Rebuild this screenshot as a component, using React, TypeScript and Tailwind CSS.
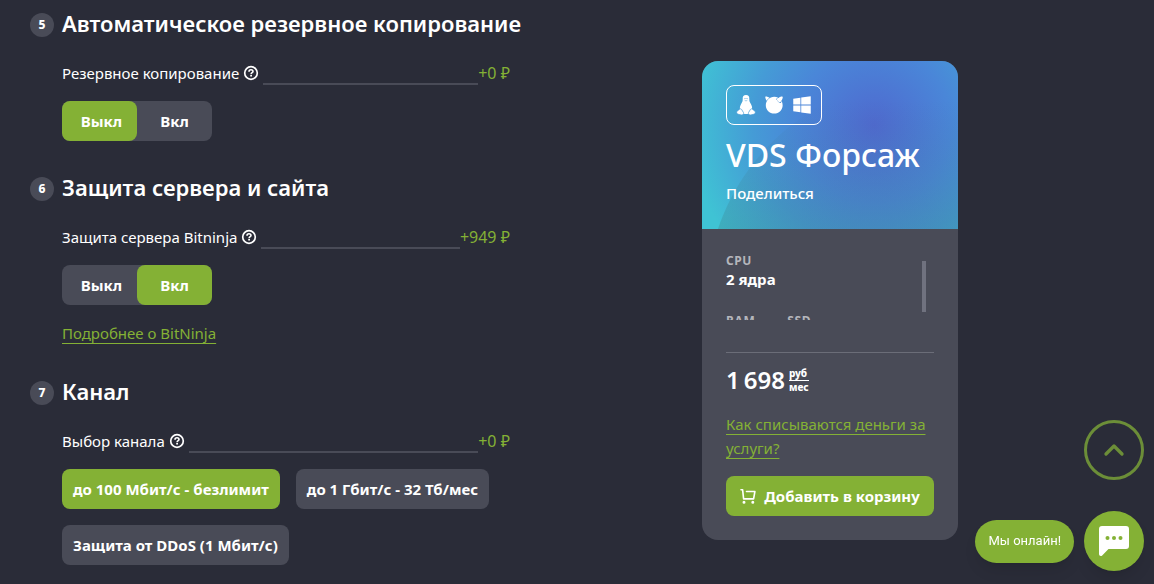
import { ChevronUp } from "lucide-react"
import { FaFreebsd, FaWindows } from "react-icons/fa"

const toggle = ["Выкл", "Вкл"]

const channels = ["до 100 Мбит/с - безлимит", "до 1 Гбит/с - 32 Тб/мес", "Защита от DDoS (1 Мбит/с)"]

const specs = [[{ label: "CPU", value: "2 ядра" }], [{ label: "RAM" }, { label: "SSD" }]]

function HelpIcon() {
  return (
    <svg viewBox="0 0 16 16" fill="none" stroke="currentColor" className="w-4 h-4">
      <circle cx="8" cy="8" r="6.3" strokeWidth="1.7" />
      <path d="M6 6.7C6 5.5 6.9 4.8 8 4.8s2 .7 2 1.7C10 7.7 8.1 7.7 8.1 9.2" strokeWidth="1.6" />
      <path d="M8.1 9.9v1.6" strokeWidth="1.8" />
    </svg>
  )
}

function CartIcon() {
  return (
    <svg
      viewBox="0 0 16 16"
      fill="none"
      stroke="currentColor"
      strokeWidth="1.6"
      strokeLinecap="round"
      strokeLinejoin="round"
      className="w-4 h-4"
    >
      <path d="M1 1.7h1.6l1 9.2h10l1.3-7.4H6.5" />
      <circle cx="4" cy="14.2" r=".7" fill="currentColor" />
      <circle cx="12.8" cy="14.2" r=".7" fill="currentColor" />
    </svg>
  )
}

function TuxIcon() {
  return (
    <svg viewBox="0 0 20 20" className="w-5 h-5" fill="currentColor">
      <path d="M10 0C7.6 0 6.5 1.6 6.7 4c.1 2.2-.5 3.2-1.7 5.2C3.9 11 3.7 13 4 15l3.5 4h5l3.5-4c.3-2 .1-4-1-5.8-1.2-2-1.8-3-1.7-5.2C13.500 1.600 12.400 0 10 0z" />
      <path
        d="M3.600 14.200 1 16.200c-.6.6-.4 2.200.3 2.600 1.600.8 3.700 1.300 5 1.100 1-.2 1.700-1.200 1.200-2.300L5.600 14.500c-.5-.7-1.300-.9-2-.3zM16.400 14.200l2.600 2c.6.6.4 2.200-.3 2.600-1.600.8-3.700 1.300-5 1.100-1-.2-1.700-1.200-1.200-2.300l1.900-3.100c.5-.7 1.300-.9 2-.3z"
        stroke="#459bd6"
        strokeWidth=".7"
      />
      <circle cx="9" cy="3.6" r=".5" fill="#459bd6" />
      <circle cx="11" cy="3.6" r=".5" fill="#459bd6" />
      <path d="M8.6 5.2 10 6l1.400-.8" stroke="#459bd6" strokeWidth=".5" fill="none" />
    </svg>
  )
}

function ChatIcon() {
  return (
    <svg viewBox="0 0 30 30" className="w-[30px] h-[30px]">
      <path d="M3 0h24a3 3 0 0 1 3 3v17a3 3 0 0 1-3 3H9.500l-6.300 6.400C2 30.500 0 30 0 28V3a3 3 0 0 1 3-3z" fill="#fff" />
      <circle cx="8.5" cy="12" r="2" fill="#84b135" />
      <circle cx="15" cy="12" r="2" fill="#84b135" />
      <circle cx="21.5" cy="12" r="2" fill="#84b135" />
    </svg>
  )
}

function Section({ number, title, option, price, children }) {
  return (
    <section className="flex gap-2">
      <span className="w-6 h-6 mt-1.5 shrink-0 rounded-full bg-[#494b57] flex items-center justify-center text-xs font-extrabold">
        {number}
      </span>
      <div className="flex-1 min-w-0">
        <h2 className="text-[22px] leading-8 font-semibold sm:whitespace-nowrap">{title}</h2>
        <div className="flex items-stretch mt-[22px] leading-6">
          <span>{option}</span>
          <button type="button" aria-label="Подсказка" className="mx-1">
            <HelpIcon />
          </button>
          <span className="flex-1 border-b-2 border-[#494b57]" />
          <span className="text-base text-[#84b135]">{price}</span>
        </div>
        <div className="mt-4">{children}</div>
      </div>
    </section>
  )
}

function Toggle({ active }) {
  return (
    <div className="inline-flex align-top rounded-lg bg-[#494b57]">
      {toggle.map((name) => (
        <button
          key={name}
          type="button"
          aria-pressed={name === active}
          className={`h-10 w-[75px] first:pl-1 rounded-lg font-bold ${name === active ? "bg-[#84b135]" : ""}`}
        >
          {name}
        </button>
      ))}
    </div>
  )
}

function OrderCard() {
  return (
    <aside className="w-64 shrink-0 mt-[54px] rounded-2xl overflow-hidden bg-[#494b57]">
      <div className="relative overflow-hidden p-6 bg-[radial-gradient(circle_at_172px_64px,#4f69cf_0%,#4a86d8_38%,#459bd6_60%,#3fc3d4_92%)]">
        <div className="absolute left-1 top-4 w-[448px] h-[448px] rounded-full bg-linear-to-b from-transparent from-5% to-[#3c6f78]/40 to-50%" />
        <div className="relative">
          <div className="w-24 h-10 rounded-lg border border-white flex items-center justify-center gap-2">
            <TuxIcon />
            <FaFreebsd className="w-5 h-5" />
            <FaWindows className="w-5 h-5" />
          </div>
          <h3 className="mt-2 text-[32px] leading-11 font-medium whitespace-nowrap">VDS Форсаж</h3>
          <button type="button" className="block mt-1 leading-6 font-medium">
            Поделиться
          </button>
        </div>
      </div>

      <div className="p-6">
        <div className="flex justify-between h-[67px] overflow-hidden pr-2">
          <dl>
            {specs.map((row, index) => (
              <div key={index} className="flex gap-8 mb-6">
                {row.map((spec) => (
                  <div key={spec.label}>
                    <dt className="text-xs leading-4 font-bold tracking-wider text-[#b5b6bc]">{spec.label}</dt>
                    <dd className="leading-5 font-bold">{spec.value}</dd>
                  </div>
                ))}
              </div>
            ))}
          </dl>
          <span className="w-1 h-[51px] mt-2 bg-[#70727f]" />
        </div>

        <div className="mt-8 border-t border-[#6b6d78] pt-[11px]">
          <div className="flex items-center gap-1 h-8">
            <span className="text-2xl leading-8 font-semibold">1&thinsp;698</span>
            <span className="text-[10px] leading-3 font-extrabold">
              <span className="block pb-px border-b border-white">руб</span>
              <span className="block">мес</span>
            </span>
          </div>
        </div>
        <a href="#billing" className="block mt-4 leading-6 text-[#84b135] underline underline-offset-4">
          Как списываются деньги за услуги?
        </a>
        <button
          type="button"
          className="mt-4 w-full h-10 rounded-lg bg-[#84b135] flex items-center justify-center gap-2 font-bold whitespace-nowrap"
        >
          <CartIcon />
          Добавить в корзину
        </button>
      </div>
    </aside>
  )
}

export default function App() {
  return (
    <div className="min-h-screen bg-[#2a2c38] text-white text-[15px] font-['Noto_Sans',sans-serif]">
      <main className="flex items-start justify-between max-w-[958px] pl-[30px] pt-[7px]">
        <div className="flex-1 max-w-[480px] space-y-[30px] pb-4">
          <Section number={5} title="Автоматическое резервное копирование" option="Резервное копирование" price="+0 ₽">
            <Toggle active="Выкл" />
          </Section>

          <Section number={6} title="Защита сервера и сайта" option="Защита сервера Bitninja" price="+949 ₽">
            <Toggle active="Вкл" />
            <a href="#bitninja" className="block mt-4 leading-6 text-[#84b135] underline underline-offset-4">
              Подробнее о BitNinja
            </a>
          </Section>

          <Section number={7} title="Канал" option="Выбор канала" price="+0 ₽">
            <div className="flex flex-wrap gap-4">
              {channels.map((name, index) => (
                <button
                  key={name}
                  type="button"
                  aria-pressed={index === 0}
                  className={`h-10 px-[11px] rounded-lg font-bold ${index === 0 ? "bg-[#84b135]" : "bg-[#494b57]"}`}
                >
                  {name}
                </button>
              ))}
            </div>
          </Section>
        </div>

        <OrderCard />
      </main>

      <div className="fixed right-2.5 bottom-[13px] flex flex-col items-end gap-[31px]">
        <button
          type="button"
          aria-label="Наверх"
          className="w-15 h-15 rounded-full border-3 border-[#6c8e38] text-[#6c8e38] flex items-center justify-center"
        >
          <ChevronUp className="w-8 h-8" strokeWidth={2.5} />
        </button>
        <div className="flex items-center gap-2.5">
          <button
            type="button"
            className="h-[43px] px-[13px] rounded-full bg-[#84b135] shadow-lg font-['Roboto',sans-serif] text-[13px]"
          >
            Мы онлайн!
          </button>
          <button
            type="button"
            aria-label="Открыть чат"
            className="w-15 h-15 rounded-full bg-[#84b135] shadow-lg flex items-center justify-center"
          >
            <ChatIcon />
          </button>
        </div>
      </div>
    </div>
  )
}
